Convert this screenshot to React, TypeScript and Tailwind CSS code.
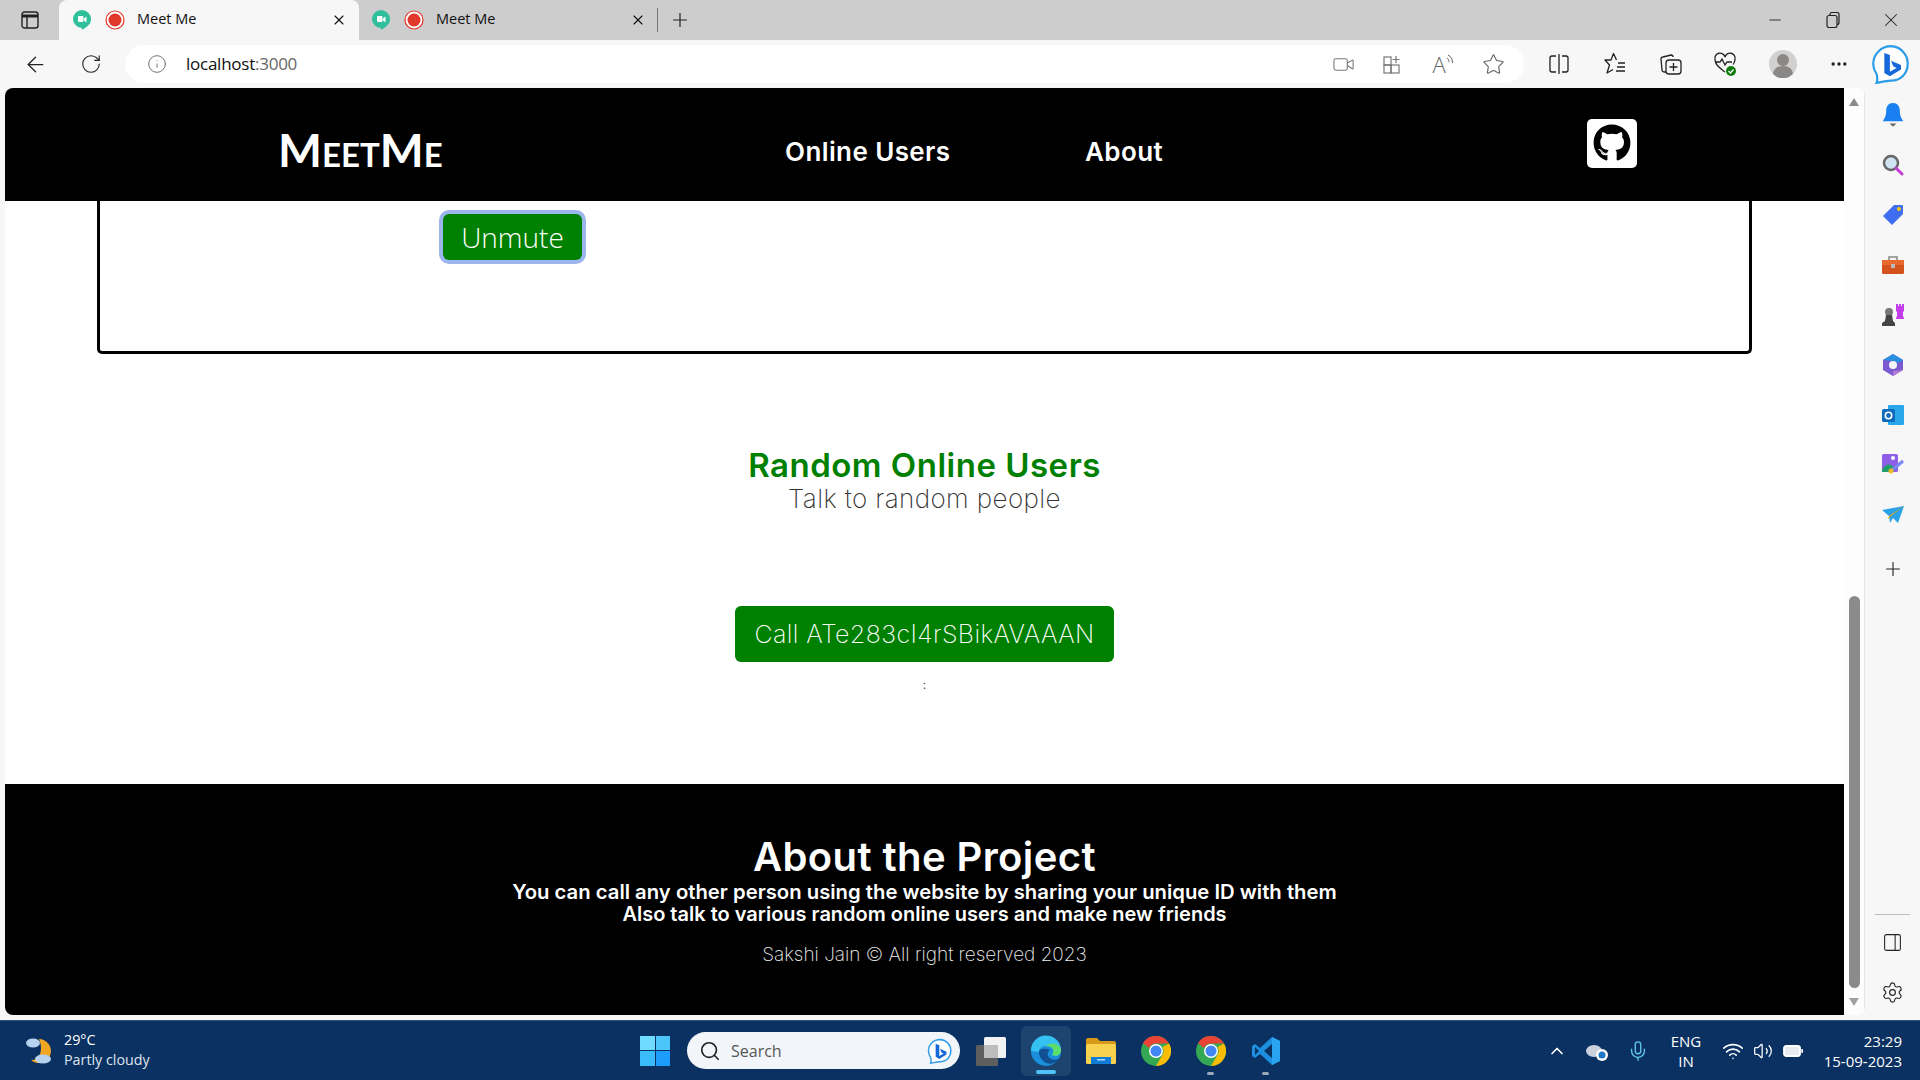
import React from "react";
import { ArrowLeft, RotateCw, Info, Video, Star, MoreHorizontal, Plus, Settings, Search, X, Minus, ChevronUp, Mic, Wifi, Volume2, PanelRight } from "lucide-react";
import { FaGithub } from "react-icons/fa";

const Meet = () => (
  <svg width="18" height="20" viewBox="0 0 18 20"><path d="M9 0a9 9 0 0 1 9 9c0 5-4 8-9 11v-2A9 9 0 0 1 9 0z" fill="#2fbf9b" /><rect x="5" y="6" width="5.500" height="6" rx="1" fill="#fff" /><path d="M11 8.500l2.500-2v6l-2.500-2z" fill="#fff" /></svg>
);
const Rec = () => (
  <svg width="20" height="20" viewBox="0 0 20 20"><circle cx="10" cy="10" r="9" fill="#fff" stroke="#e0392b" strokeWidth="1.200" /><circle cx="10" cy="10" r="6.500" fill="#e0392b" /></svg>
);
const Bing = ({ s = 36 }: { s?: number }) => (
  <svg width={s} height={s} viewBox="0 0 36 36">
    <path d="M18 2a15.500 15.500 0 0 1 15 16c0 8-6 15-15 15-4 0-8 1-13 2 1-3 1-5 0-8-2-3-3-6-3-9A16 16 0 0 1 18 2z" fill="#fff" stroke="#2d9ce8" strokeWidth="2" />
    <path d="M12 8l5 2v15l6-3.500-3-1.500-2-5 9 4v4l-10 6-5-3z" fill="#1668d8" />
  </svg>
);
const Chrome = () => (
  <svg width="30" height="30" viewBox="0 0 30 30">
    <circle cx="15" cy="15" r="15" fill="#34a853" />
    <path d="M15 0a15 15 0 0 1 13 7.500H15a7.500 7.500 0 0 0-7 4.500L2 7a15 15 0 0 1 13-7z" fill="#ea4335" />
    <path d="M28 7.500A15 15 0 0 1 15 30l6.500-11.200A7.500 7.500 0 0 0 21.500 11z" fill="#fbbc04" />
    <circle cx="15" cy="15" r="7" fill="#fff" /><circle cx="15" cy="15" r="5.500" fill="#4285f4" />
  </svg>
);
const Tab = ({ active }: { active?: boolean }) => (
  <div className={active ? "flex h-10 w-[300px] shrink-0 items-center rounded-t-lg bg-[#f7f7f7] pl-[14px]" : "flex h-10 w-[298px] shrink-0 items-center pl-[13px]"}>
    <Meet />
    <span className="ml-[14px]"><Rec /></span>
    <span className="ml-[12px] mb-[2px] w-[61px] font-['Open_Sans',sans-serif] text-[14.500px] text-[#111]">Meet Me</span>
    <span className="ml-[133px]"><X size={16} strokeWidth={1.6} color="#111" /></span>
  </div>
);
const Box = ({ w, children, className = "" }: { w: string; children?: React.ReactNode; className?: string }) => (
  <div className={`flex shrink-0 items-center justify-center ${w} ${className}`}>{children}</div>
);

const SideIcon = ({ children }: { children: React.ReactNode }) => (
  <div className="flex h-[50px] w-[55px] items-center justify-center">{children}</div>
);

export default function App() {
  return (
    <div className="flex h-[1080px] w-[1920px] flex-col overflow-hidden bg-[#f7f7f7] font-['Inter',sans-serif]">
      <div className="flex h-10 shrink-0 items-center bg-[#cdcdcd]">
        <Box w="w-[59px]">
          <svg width="18" height="18" viewBox="0 0 18 18" fill="none" stroke="#222" strokeWidth="1.400"><rect x="1" y="1" width="16" height="16" rx="2.500" /><path d="M1 5h16" strokeWidth="3" /><path d="M6 5v12" /></svg>
        </Box>
        <Tab active />
        <Tab />
        <div className="h-6 w-px bg-[#777]" />
        <Box w="w-[44px]"><Plus size={22} strokeWidth={1.3} color="#222" /></Box>
        <div className="flex-1" />
        <Box w="w-[58px]"><Minus size={18} strokeWidth={1.2} color="#222" /></Box>
        <Box w="w-[58px]">
          <svg width="16" height="16" viewBox="0 0 16 16" fill="none" stroke="#222" strokeWidth="1.200"><rect x="2" y="3.500" width="10" height="12" rx="2" /><path d="M5 3V2.500a2 2 0 0 1 2-2h5a2 2 0 0 1 2 2v8a2 2 0 0 1-2 2" /></svg>
        </Box>
        <Box w="w-[58px]"><X size={22} strokeWidth={1.100} color="#222" /></Box>
      </div>

      <div className="flex h-12 shrink-0 items-center bg-[#f7f7f7]">
        <Box w="w-[70px]"><ArrowLeft size={25} strokeWidth={1.200} color="#222" /></Box>
        <Box w="w-[41px]"><RotateCw size={22} strokeWidth={1.200} color="#222" /></Box>
        <div className="ml-[14px] flex h-[38px] w-[1400px] items-center rounded-full bg-white">
          <span className="ml-[22px]"><Info size={20} strokeWidth={1.100} color="#666" /></span>
          <span className="ml-[19px] font-['Open_Sans',sans-serif] text-[17px] tracking-[-0.250px] text-[#111]">localhost<span className="text-[#666]">:3000</span></span>
          <div className="flex-1" />
          <Box w="w-[50px]"><Video size={23} strokeWidth={1.100} color="#777" /></Box>
          <Box w="w-[50px]">
            <svg width="20" height="22" viewBox="0 0 20 22" fill="none" stroke="#777" strokeWidth="1.200"><rect x="1" y="4" width="7" height="8" /><rect x="1" y="12" width="7" height="8" /><rect x="8" y="12" width="8" height="8" /><path d="M13 3v7M9.500 6.500h7" /></svg>
          </Box>
          <Box w="w-[50px]">
            <span className="font-['Open_Sans',sans-serif] text-[22px] font-light leading-none text-[#666]">A</span>
            <svg className="mb-[10px]" width="8" height="12" viewBox="0 0 8 12" fill="none" stroke="#666" strokeWidth="1"><path d="M1 5c1.500 1 2 2 2 4M2 2c3 1.500 4.500 4 4.500 8" /></svg>
          </Box>
          <Box w="w-[50px]"><Star size={23} strokeWidth={1.200} color="#666" /></Box>
          <div className="w-[6px]" />
        </div>
        <Box w="w-[59px]" className="ml-[5px]">
          <svg width="20" height="22" viewBox="0 0 20 22" fill="none" stroke="#222" strokeWidth="1.300"><path d="M7 3H3a2 2 0 0 0-2 2v12a2 2 0 0 0 2 2h4M13 3h4a2 2 0 0 1 2 2v12a2 2 0 0 1-2 2h-4M10 1v20" /></svg>
        </Box>
        <Box w="w-[53px]">
          <svg width="22" height="24" viewBox="0 0 22 24" fill="none" stroke="#222" strokeWidth="1.300" strokeLinejoin="round"><path d="M12.500 8L9.500 1.500 7 8H1l4.500 5L3 21l6-3.500M14 11h7M13 15h8M12 19h9" /></svg>
        </Box>
        <Box w="w-[59px]">
          <svg width="22" height="24" viewBox="0 0 22 24" fill="none" stroke="#222" strokeWidth="1.300"><path d="M6 20H4a2 2 0 0 1-2-2L1 7a2 2 0 0 1 2-2l8-2a2 2 0 0 1 2 2" /><rect x="6" y="8" width="15" height="14" rx="3" /><path d="M13.500 11v8M9.500 15h8" /></svg>
        </Box>
        <Box w="w-[49px]" className="relative">
          <svg width="24" height="26" viewBox="0 0 24 26" fill="none"><path d="M12 21C7 17 2 14 2 8.500A5 5 0 0 1 12 6a5 5 0 0 1 10 2.500c0 2-1 3.500-2 5" stroke="#222" strokeWidth="1.300" /><path d="M3 11h4l2-3 3 6 2-3h5" stroke="#222" strokeWidth="1.300" /><circle cx="18" cy="20" r="5" fill="#107c10" /><path d="M15.500 20l2 2 3-3.500" stroke="#fff" strokeWidth="1.200" /></svg>
        </Box>
        <Box w="w-[67px]">
          <svg width="28" height="28" viewBox="0 0 28 28"><circle cx="14" cy="14" r="14" fill="#d2d0ce" /><circle cx="14" cy="10" r="6" fill="#8a8886" /><path d="M4 24c1-6 5-8 10-8s9 2 10 8a14 14 0 0 1-20 0z" fill="#8a8886" /></svg>
        </Box>
        <Box w="w-[45px]"><MoreHorizontal size={20} strokeWidth={2} color="#222" /></Box>
        <Box w="w-[59px]"><Bing s={40} /></Box>
      </div>

      <div className="flex min-h-0 flex-1">
        <div className="ml-[5px] flex h-[927px] w-[1860px] overflow-hidden rounded-lg bg-white">
          <div className="flex w-[1839px] flex-col">
            <nav className="flex h-[113px] shrink-0 items-center bg-black text-white">
              <span className="ml-[273px] mt-[10px] w-[167px] font-['Lato',sans-serif] text-[46.500px] font-bold leading-none [font-variant:small-caps]">MeetMe</span>
              <span className="ml-[340px] mt-[13px] w-[180px] whitespace-nowrap text-[26px] font-semibold tracking-[0.400px]">Online Users</span>
              <span className="ml-[120px] mt-[13px] w-[90px] text-[26px] font-semibold tracking-[0.400px]">About</span>
              <div className="mb-[3px] ml-[412px] flex h-[49px] w-[50px] items-center justify-center rounded-[5px] bg-white">
                <FaGithub size={38} color="#000" />
              </div>
            </nav>
            <main className="flex h-[583px] shrink-0 flex-col items-center bg-white">
              <div className="h-[153px] w-[1655px] rounded-b-[5px] border-x-[3px] border-b-[3px] border-black pl-[343px] pt-[13px]">
                <button className="h-[46px] w-[139px] rounded-md bg-[#008000] font-['Open_Sans',sans-serif] text-[28px] font-light leading-none text-white ring-[4px] ring-[#9cb6ec]">Unmute</button>
              </div>
              <h2 className="mt-[91px] text-[33px] font-semibold leading-10 tracking-[0.500px] text-[#008000]">Random Online Users</h2>
              <p className="mt-[-3px] text-[26px] font-extralight leading-[34px] tracking-[0.400px] text-[#333]">Talk to random people</p>
              <button className="mt-[90px] h-[56px] w-[379px] rounded-md bg-[#008000] pt-[2px] text-[25px] font-extralight tracking-[0.400px] text-white">Call ATe283cI4rSBikAVAAAN</button>
              <span className="mt-[15px] text-[12px] leading-4 text-[#555]">:</span>
            </main>
            <footer className="flex h-[231px] shrink-0 flex-col items-center bg-black pt-[49px] text-white">
              <h2 className="text-[40px] font-semibold leading-[48px] tracking-[0.400px]">About the Project</h2>
              <p className="mt-[-1px] text-[20.300px] font-semibold leading-[23px]">You can call any other person using the website by sharing your unique ID with them</p>
              <p className="text-[20px] font-semibold leading-[23px]">Also talk to various random online users and make new friends</p>
              <p className="mt-[17px] text-[19px] font-extralight leading-6 text-[#eee]">Sakshi Jain © All right reserved 2023</p>
            </footer>
          </div>
          <div className="flex w-[21px] flex-col items-center border-r border-[#e4e4e4] bg-[#fdfdfd] pt-[10px]">
            <div className="h-0 w-0 border-x-[5.500px] border-b-[8px] border-x-transparent border-b-[#8b8b8b]" />
            <div className="mt-[490px] h-[392px] w-[11px] rounded-full bg-[#8b8b8b]" />
            <div className="mt-[10px] h-0 w-0 border-x-[5.500px] border-t-[8px] border-x-transparent border-t-[#a0a0a0]" />
          </div>
        </div>
        <aside className="flex w-[55px] flex-col items-center pt-[2px]">
          <SideIcon><svg width="24" height="25" viewBox="0 0 20 22"><path d="M10 0c4 0 6 3 6 7 0 5 2 7 3 9H1c1-2 3-4 3-9 0-4 2-7 6-7z" fill="#1a7ff0" /><path d="M7 18h6l-3 3z" fill="#666" /></svg></SideIcon>
          <SideIcon><svg width="22" height="22" viewBox="0 0 22 22" fill="none"><circle cx="9" cy="9" r="7" fill="#cfe3f2" stroke="#666" strokeWidth="2.500" /><path d="M14 14l6 6" stroke="#c43fd6" strokeWidth="3" strokeLinecap="round" /></svg></SideIcon>
          <SideIcon><svg width="22" height="22" viewBox="0 0 22 22"><path d="M12 1h8a1 1 0 0 1 1 1v8L10 21 1 12z" fill="#3f6ff0" /><circle cx="17" cy="5" r="2" fill="#f5c518" /></svg></SideIcon>
          <SideIcon><svg width="24" height="20" viewBox="0 0 24 20"><path d="M8 5V2h8v3" fill="none" stroke="#888" strokeWidth="1.500" /><rect x="1" y="5" width="22" height="14" rx="1.500" fill="#d4521d" /><rect x="1" y="5" width="22" height="5" fill="#e8682e" /><rect x="10" y="9" width="4" height="4" fill="#bbb" /></svg></SideIcon>
          <SideIcon><svg width="24" height="24" viewBox="0 0 24 24"><path d="M15 1h2v2h1V1h2v2h1V1h2v7l-1 1v4l1 2v1h-8v-1l1-2V9l-1-1z" fill="#c13ee8" /><circle cx="8" cy="9" r="4" fill="#777" /><path d="M5 12h6l1 6 2 2v3H1v-3l3-2z" fill="#444" /></svg></SideIcon>
          <SideIcon><svg width="22" height="24" viewBox="0 0 22 24"><path d="M11 1l10 6v10l-10 6L1 17V7z" fill="#7b5bd0" /><path d="M11 1l10 6-5 3-5-2-10-1z" fill="#2a8fe0" /><path d="M21 17l-10 6v-5z" fill="#b57ad8" /><circle cx="11" cy="12" r="4" fill="#f7f7f7" /></svg></SideIcon>
          <SideIcon><svg width="22" height="22" viewBox="0 0 22 22"><rect x="6" y="1" width="16" height="20" rx="1" fill="#28a8ea" /><rect y="5" width="13" height="13" rx="1.500" fill="#0f6cbd" /><circle cx="6.500" cy="11.500" r="3.200" fill="none" stroke="#fff" strokeWidth="1.600" /></svg></SideIcon>
          <SideIcon><svg width="24" height="24" viewBox="0 0 24 24"><rect x="1" y="1" width="16" height="18" rx="1.500" fill="#8f5fe8" /><path d="M1 17c4-7 9-7 12-2v4H1z" fill="#1f9d6a" /><circle cx="12" cy="5" r="2" fill="#fff" /><path d="M10 18L22 8" stroke="#7788ee" strokeWidth="3" /><circle cx="10" cy="18" r="2.500" fill="#f2b824" /></svg></SideIcon>
          <SideIcon><svg width="22" height="18" viewBox="0 0 22 18"><path d="M0 4l22-4-6 17-5-5-3 5-1-7z" fill="#2aa2e8" /><path d="M22 0L7 10 6 13 9 10z" fill="#f0a010" /></svg></SideIcon>
          <div className="flex h-[58px] w-[55px] items-center justify-center"><Plus size={22} strokeWidth={1.200} color="#222" /></div>
          <div className="mt-[316px] h-px w-[35px] bg-[#bdbdbd]" />
          <Box w="w-[55px]" className="h-[55px]"><PanelRight size={21} strokeWidth={1.200} color="#222" /></Box>
          <Box w="w-[55px]" className="h-[44px]"><Settings size={23} strokeWidth={1.200} color="#222" /></Box>
        </aside>
      </div>

      <div className="flex h-[60px] shrink-0 items-center border-t border-[#2b4f7a] bg-[#0a3161] font-['Open_Sans',sans-serif] text-white">
        <Box w="w-[64px]" className="pl-[14px]">
          <svg width="32" height="32" viewBox="0 0 32 32"><path d="M16 4a12 12 0 1 1-8 21c8 1 13-9 8-21z" fill="#f0a623" /><ellipse cx="10" cy="8" rx="7" ry="4.500" fill="#b6d2ee" /><ellipse cx="20" cy="24" rx="8" ry="4.500" fill="#b6d2ee" /></svg>
        </Box>
        <div className="mb-[2px] w-[110px] whitespace-nowrap text-[14.300px] leading-5">
          <div>29°C</div>
          <div className="text-[#dfe5ee]">Partly cloudy</div>
        </div>
        <div className="ml-[466px] grid h-[30px] w-[30px] grid-cols-2 gap-[1px]">
          <div className="bg-[#6fdcff]" /><div className="bg-[#4cc5fb]" /><div className="bg-[#3bbcfa]" /><div className="bg-[#1d9dfb]" />
        </div>
        <div className="ml-[17px] flex h-[37px] w-[273px] items-center rounded-full bg-[#f2f5fa] pl-[12px] text-[#555]">
          <Search size={22} strokeWidth={1.800} color="#222" />
          <span className="ml-[10px] flex-1 text-[16px]">Search</span>
          <span className="mr-[7px]"><Bing s={26} /></span>
        </div>
        <Box w="w-[61px]">
          <svg width="32" height="30" viewBox="0 0 32 30"><rect x="1" y="9" width="22" height="21" rx="1.500" fill="#5e5e5e" /><rect x="9" y="1" width="22" height="21" rx="1.500" fill="#f2f2f2" /><rect x="9" y="9" width="14" height="13" fill="#bdbdbd" /></svg>
        </Box>
        <Box w="w-[50px]" className="relative h-[50px] rounded-md bg-[#1d436f]">
          <svg width="32" height="32" viewBox="0 0 32 32"><circle cx="16" cy="16" r="15" fill="#1c8fdc" /><path d="M1 16a15 15 0 0 1 30-1c0 5-5 7-9 5 3-4 1-9-6-9-5 0-7 3-7 6z" fill="#35c1f1" /><path d="M31 15c0 5-5 7-9 5 3-4 1-9-6-9 8-6 15 0 15 4z" fill="#5ddc6a" /><path d="M9 17c0 7 7 14 15 11 3-1 5-3 6-5-4 3-10 2-12-2-1-3 0-5 2-6-3-2-11-2-11 2z" fill="#0f4f92" /></svg>
          <div className="absolute bottom-[2px] h-[4px] w-[20px] rounded-full bg-[#4fc3f7]" />
        </Box>
        <Box w="w-[60px]">
          <svg width="30" height="26" viewBox="0 0 30 26"><path d="M0 2a2 2 0 0 1 2-2h9l3 3h14a2 2 0 0 1 2 2v2H0z" fill="#d79a18" /><rect y="6" width="30" height="20" rx="1.500" fill="#f8d24e" /><rect x="5" y="19" width="20" height="7" fill="#0f7cd6" /><rect x="11" y="21" width="8" height="1.500" fill="#a9d8f5" /></svg>
        </Box>
        <Box w="w-[55px]" className="ml-[-3px]"><Chrome /></Box>
        <Box w="w-[55px]" className="relative h-[50px]"><Chrome /><div className="absolute bottom-[1px] h-[3px] w-[7px] rounded-full bg-[#9aa7b8]" /></Box>
        <Box w="w-[55px]" className="relative h-[50px]">
          <svg width="30" height="30" viewBox="0 0 30 30"><path d="M21 1l8 4v20l-8 4L9 18l-5 4-3-2v-10l3-2 5 4z" fill="#1d8fe0" /><path d="M21 1l8 4v20l-8 4z" fill="#2aa4f0" /><path d="M21 8v14l-8-7z" fill="#0a3161" /><path d="M4 11v8l4-4z" fill="#0a3161" /></svg>
          <div className="absolute bottom-[1px] h-[3px] w-[7px] rounded-full bg-[#9aa7b8]" />
        </Box>
        <div className="flex-1" />
        <Box w="w-[40px]"><ChevronUp size={20} strokeWidth={2} color="#fff" /></Box>
        <Box w="w-[40px]">
          <svg width="24" height="20" viewBox="0 0 24 20"><ellipse cx="9" cy="10" rx="8" ry="6" fill="#c9d2dc" /><circle cx="17" cy="14" r="6" fill="#fff" /><circle cx="17" cy="14" r="3.500" fill="#1d76c8" /></svg>
        </Box>
        <Box w="w-[42px]"><Mic size={22} strokeWidth={1.500} color="#61c3e8" /></Box>
        <div className="ml-[3px] w-[48px] text-center text-[15px] leading-5">ENG<br />IN</div>
        <Box w="w-[38px]" className="ml-[4px]"><Wifi size={22} strokeWidth={1.800} color="#fff" /></Box>
        <Box w="w-[22px]"><Volume2 size={20} strokeWidth={1.500} color="#fff" /></Box>
        <Box w="w-[38px]">
          <svg width="20" height="12" viewBox="0 0 20 12"><rect x="0.700" y="0.700" width="16.600" height="10.600" rx="2.500" fill="#fff" stroke="#fff" strokeWidth="1.200" /><rect x="2" y="2" width="14" height="8" rx="1.500" fill="#e8edf3" /><rect x="18.300" y="4" width="1.700" height="4" rx="0.800" fill="#fff" /></svg>
        </Box>
        <div className="mr-[18px] w-[90px] whitespace-nowrap text-right text-[15px] leading-5">23:29<br />15-09-2023</div>
      </div>
    </div>
  );
}
